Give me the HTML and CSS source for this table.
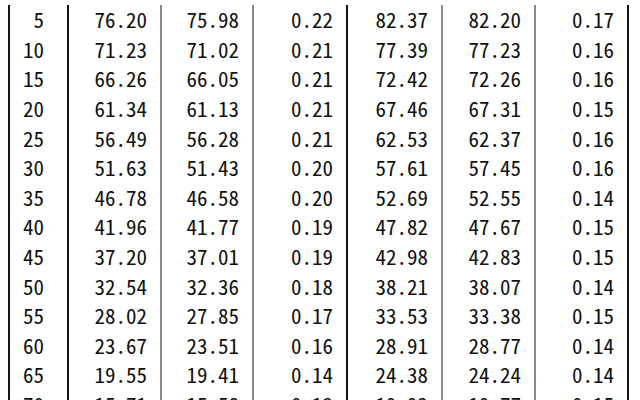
FILE: index.html
```html
<!DOCTYPE html>
<html lang="ja">
<head>
<meta charset="utf-8">
<link rel="stylesheet" href="styles.css">
</head>
<body>
<table class="data">
<colgroup>
<col class="c1"><col class="c2"><col class="c3"><col class="c4"><col class="c5"><col class="c6"><col class="c7">
</colgroup>
<tbody>
<tr><td>5</td><td>76.20</td><td class="g">75.98</td><td class="g">0.22</td><td>82.37</td><td class="g">82.20</td><td class="g last">0.17</td></tr>
<tr><td>10</td><td>71.23</td><td class="g">71.02</td><td class="g">0.21</td><td>77.39</td><td class="g">77.23</td><td class="g last">0.16</td></tr>
<tr><td>15</td><td>66.26</td><td class="g">66.05</td><td class="g">0.21</td><td>72.42</td><td class="g">72.26</td><td class="g last">0.16</td></tr>
<tr><td>20</td><td>61.34</td><td class="g">61.13</td><td class="g">0.21</td><td>67.46</td><td class="g">67.31</td><td class="g last">0.15</td></tr>
<tr><td>25</td><td>56.49</td><td class="g">56.28</td><td class="g">0.21</td><td>62.53</td><td class="g">62.37</td><td class="g last">0.16</td></tr>
<tr><td>30</td><td>51.63</td><td class="g">51.43</td><td class="g">0.20</td><td>57.61</td><td class="g">57.45</td><td class="g last">0.16</td></tr>
<tr><td>35</td><td>46.78</td><td class="g">46.58</td><td class="g">0.20</td><td>52.69</td><td class="g">52.55</td><td class="g last">0.14</td></tr>
<tr><td>40</td><td>41.96</td><td class="g">41.77</td><td class="g">0.19</td><td>47.82</td><td class="g">47.67</td><td class="g last">0.15</td></tr>
<tr><td>45</td><td>37.20</td><td class="g">37.01</td><td class="g">0.19</td><td>42.98</td><td class="g">42.83</td><td class="g last">0.15</td></tr>
<tr><td>50</td><td>32.54</td><td class="g">32.36</td><td class="g">0.18</td><td>38.21</td><td class="g">38.07</td><td class="g last">0.14</td></tr>
<tr><td>55</td><td>28.02</td><td class="g">27.85</td><td class="g">0.17</td><td>33.53</td><td class="g">33.38</td><td class="g last">0.15</td></tr>
<tr><td>60</td><td>23.67</td><td class="g">23.51</td><td class="g">0.16</td><td>28.91</td><td class="g">28.77</td><td class="g last">0.14</td></tr>
<tr><td>65</td><td>19.55</td><td class="g">19.41</td><td class="g">0.14</td><td>24.38</td><td class="g">24.24</td><td class="g last">0.14</td></tr>
<tr><td>70</td><td>15.71</td><td class="g">15.58</td><td class="g">0.13</td><td>19.92</td><td class="g">19.77</td><td class="g last">0.15</td></tr>
</tbody>
</table>
</body>
</html>
```
FILE: styles.css
```css
html, body {
  margin: 0;
  padding: 0;
  background: #ffffff;
  overflow: hidden;
}

.data {
  margin: 5px 0 0 8px;
  border-collapse: separate;
  border-spacing: 0;
  table-layout: fixed;
  width: 621px;
  font-family: "Noto Sans CJK JP", "DejaVu Sans Mono", monospace;
  font-feature-settings: "hwid" 1;
  font-size: 21px;
  font-weight: 400;
  letter-spacing: 0;
  color: #111111;
}

.c1 { width: 59px; }
.c2 { width: 93px; }
.c3 { width: 92px; }
.c4 { width: 94px; }
.c5 { width: 95px; }
.c6 { width: 93px; }
.c7 { width: 95px; }

.data td {
  height: 29.6px;
  padding: 0 13px 0 0;
  box-sizing: border-box;
  text-align: right;
  vertical-align: middle;
  line-height: 1;
  border-left: 2px solid #161616;
  white-space: nowrap;
}

.data td:first-child {
  padding-right: 23px;
}

.data td.g {
  border-left-color: #8a8a8a;
}

.data td.last {
  border-right: 2px solid #161616;
}
```
